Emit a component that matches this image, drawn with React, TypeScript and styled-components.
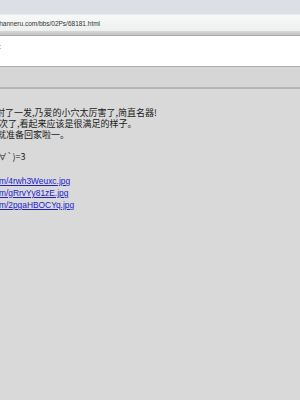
import styled, { createGlobalStyle } from "styled-components";

const GlobalStyle = createGlobalStyle`
  html, body {
    margin: 0;
    padding: 0;
    height: 100%;
    background: #d9d9d9;
    overflow: hidden;
  }
  #root {
    height: 100%;
  }
`;

const Page = styled.div`
  width: 300px;
  height: 400px;
  display: flex;
  flex-direction: column;
  overflow: hidden;
  background: #d9d9d9;
`;

const TopBand = styled.div`
  height: 14px;
  background: #dcdfe6;
`;

const AddressBar = styled.div`
  height: 16px;
  display: flex;
  align-items: center;
  overflow: hidden;
  background: linear-gradient(#f7f8f8, #eef0f0);
  border-top: 1px solid #e8eaee;
`;

const Url = styled.span`
  margin-left: -4px; // 앞부분 잘린 상태
  font-family: "Liberation Sans", Arial, sans-serif;
  font-size: 6.5px;
  color: #333;
  white-space: nowrap;
`;

const ShadowBand = styled.div`
  height: 4px;
  background: linear-gradient(#d6d6d6, #c4c4c4);
  border-bottom: 1px solid #a8a8a8;
`;

const Header = styled.div`
  height: 30px;
  background: #ffffff;
  border-bottom: 1px solid #adadad;
  position: relative;
`;

const Colon = styled.span`
  position: absolute;
  left: -1px;
  top: 6px;
  font-family: "Liberation Sans", Arial, sans-serif;
  font-size: 8px;
  color: #555;
`;

const SubBar = styled.div`
  height: 20px;
  background: #d6d6d6;
  border-bottom: 2px solid #b5b5b5;
`;

const Body = styled.div`
  flex: 1;
  padding-top: 18px;
  overflow: hidden;
`;

const Post = styled.div`
  font-family: "Noto Sans CJK SC", "Liberation Sans", sans-serif;
  font-size: 9px;
  line-height: 11px;
  color: #1a1a1a;
  white-space: nowrap;
`;

const Line = styled.div<{ shift: number }>`
  margin-left: ${(p) => p.shift}px;
  height: 11px;
`;

const Gap = styled.div<{ h: number }>`
  height: ${(p) => p.h}px;
`;

const Links = styled.div`
  display: flex;
  flex-direction: column;
  font-family: "Liberation Sans", Arial, sans-serif;
  font-size: 8.4px;
  line-height: 12px;
`;

const Link = styled.a`
  color: #2020cc;
  text-decoration: underline;
  margin-left: -1px;
  white-space: nowrap;
`;

const lines = [
  { text: "射了一发,乃爱的小穴太厉害了,简直名器!", shift: -4 },
  { text: "次了,看起来应该是很满足的样子。", shift: -1 },
  { text: "就准备回家啦一。", shift: -3 },
];

const links = ["m/4rwh3Weuxc.jpg", "m/gRrvYy81zE.jpg", "m/2pgaHBOCYq.jpg"];

function App() {
  return (
    <Page>
      <GlobalStyle />
      <TopBand />
      <AddressBar>
        <Url>channeru.com/bbs/02Ps/68181.html</Url>
      </AddressBar>
      <ShadowBand />
      <Header>
        <Colon>:</Colon>
      </Header>
      <SubBar />
      <Body>
        <Post>
          {lines.map((l) => (
            <Line key={l.text} shift={l.shift}>
              {l.text}
            </Line>
          ))}
          <Gap h={11} />
          <Line shift={-2}>∀`)=3</Line>
          <Gap h={13} />
        </Post>
        <Links>
          {links.map((href) => (
            <Link key={href} href="#">
              {href}
            </Link>
          ))}
        </Links>
      </Body>
    </Page>
  );
}

export default App;
